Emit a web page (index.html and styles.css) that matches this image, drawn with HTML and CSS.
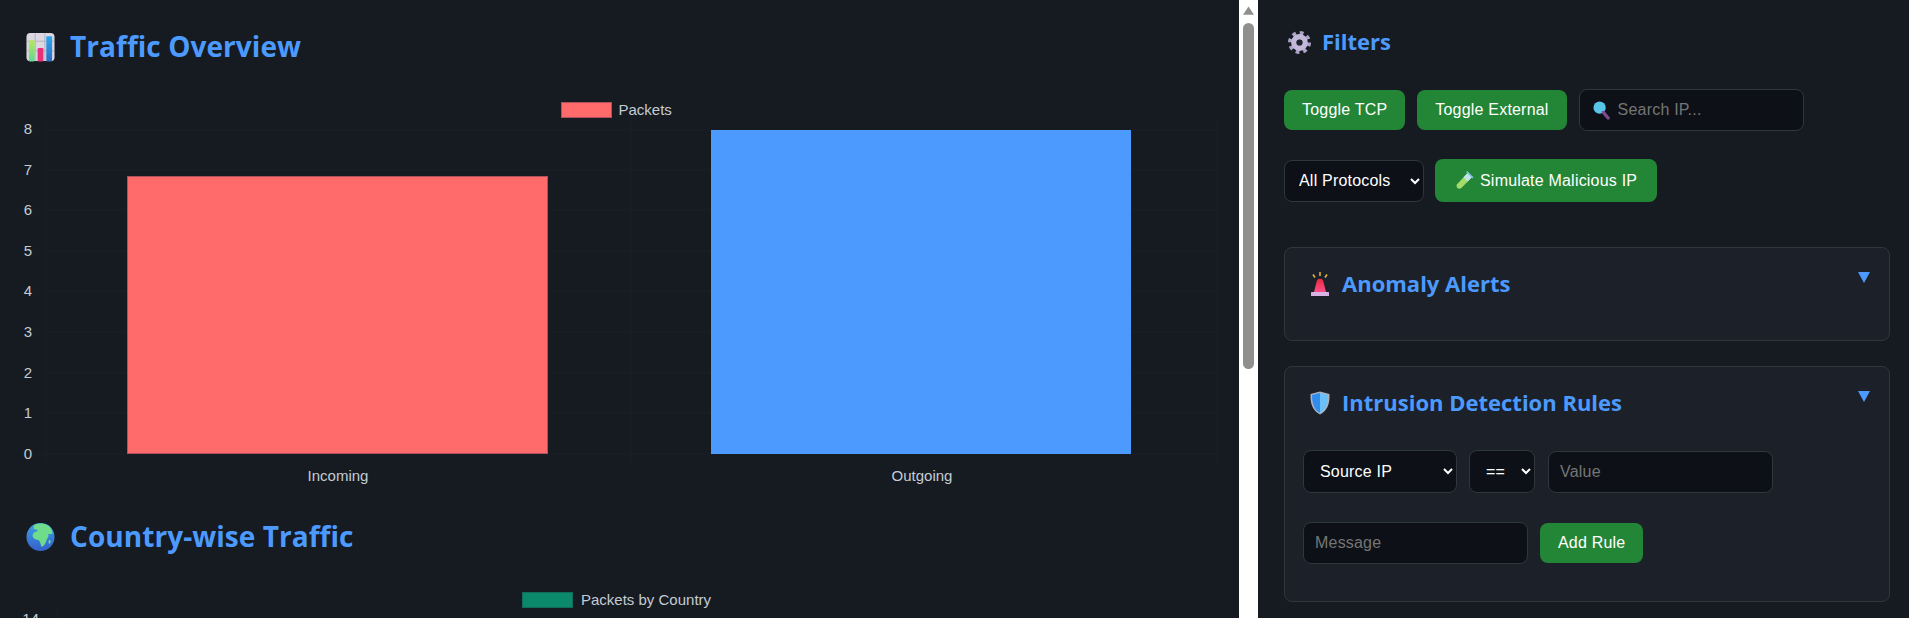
FILE: index.html
```html
<!DOCTYPE html>
<html lang="en">
<head>
<meta charset="UTF-8">
<meta name="viewport" content="width=device-width, initial-scale=1.0">
<title>Network Traffic Dashboard</title>
<link rel="stylesheet" href="styles.css">
</head>
<body>
  <div class="page">

    <div class="main">
      <h2 class="chart-title">
        <svg class="emoji-lg" viewBox="0 0 30 30">
          <defs>
            <linearGradient id="barGreen" x1="0" y1="0" x2="0" y2="1"><stop offset="0" stop-color="#b6e85a"/><stop offset="1" stop-color="#5fd98c"/></linearGradient>
            <linearGradient id="barBlue" x1="0" y1="0" x2="0" y2="1"><stop offset="0" stop-color="#2ba7f0"/><stop offset="1" stop-color="#2b6fc4"/></linearGradient>
          </defs>
          <rect x="0.5" y="0.5" width="29" height="29" rx="4" fill="#dcd7e3"/>
          <path d="M9.5 1v28M19.5 1v28M1 9h28M1 19h28" stroke="#b5b0bd" stroke-width="1"/>
          <rect x="3" y="8" width="6" height="22" rx="1" fill="url(#barGreen)"/>
          <rect x="12" y="16" width="6" height="14" rx="1" fill="#e8307a"/>
          <rect x="21" y="4" width="6" height="26" rx="1" fill="url(#barBlue)"/>
        </svg>
        Traffic Overview
      </h2>
      <svg class="chart" viewBox="0 0 1200 400">
        <g class="grid">
          <path d="M26 40H1197M26 80H1197M26 120H1197M26 161H1197M26 201H1197M26 242H1197M26 283H1197M26 323H1197"/>
          <path d="M26 30V373M611 30V373M1197 30V373M17 364H1197"/>
        </g>
        <rect class="bar-red" x="107.500" y="86.500" width="420" height="277"/>
        <rect class="bar-blue" x="691" y="40" width="420" height="324"/>
        <rect class="bar-red" x="541.500" y="12.500" width="50" height="15"/>
        <text class="legend-text" x="598.500" y="25">Packets</text>
        <g class="ticks" text-anchor="end">
          <text x="12" y="44">8</text>
          <text x="12" y="85">7</text>
          <text x="12" y="125">6</text>
          <text x="12" y="166">5</text>
          <text x="12" y="206">4</text>
          <text x="12" y="247">3</text>
          <text x="12" y="288">2</text>
          <text x="12" y="328">1</text>
          <text x="12" y="369">0</text>
        </g>
        <g class="ticks" text-anchor="middle">
          <text x="318" y="391">Incoming</text>
          <text x="902" y="391">Outgoing</text>
        </g>
      </svg>

      <h2 class="chart-title spaced">
        <svg class="emoji-lg" viewBox="0 0 30 30">
          <defs>
            <linearGradient id="globeBlue" x1="0" y1="0" x2="0" y2="1"><stop offset="0" stop-color="#3aa0ea"/><stop offset="1" stop-color="#3660c8"/></linearGradient>
          </defs>
          <ellipse cx="15" cy="15" rx="14.500" ry="14.500" fill="url(#globeBlue)"/>
          <path d="M8 3C11 0.500 20 0 24 4C27 7 28 10 27 12L23 12C24 15 22 16 21 19C20 23 18 25 16 25C15 22 15 20 13 18C9 18 6 16 7 12C8 10 10 9 12 9C12 7 10 7 8 7Z" fill="#6fdc8c"/>
          <path d="M24 18C26 18 26 21 24 22C23 21 23 19 24 18Z" fill="#6fdc8c"/>
        </svg>
        Country-wise Traffic
      </h2>
      <svg class="chart" viewBox="0 0 1200 400">
        <g class="grid">
          <path d="M37 39H1197M37 30V373"/>
        </g>
        <rect class="bar-green" x="502.500" y="12.500" width="50" height="15"/>
        <text class="legend-text" x="561" y="25">Packets by Country</text>
        <g class="ticks" text-anchor="end">
          <text x="19" y="44">14</text>
        </g>
      </svg>
    </div>

    <div class="scrollbar">
      <svg class="scroll-arrow" viewBox="0 0 12 9"><path d="M6 0L12 9H0Z"/></svg>
      <div class="scroll-thumb"></div>
    </div>

    <div class="side">
      <h3 class="filters-title">
        <svg class="emoji-md" viewBox="0 0 24 24">
          <circle cx="12" cy="12" r="10" fill="none" stroke="#ada2c8" stroke-width="4" stroke-dasharray="3.850 4"/>
          <circle cx="12" cy="12" r="6" fill="none" stroke="#c2b8d8" stroke-width="5.500"/>
          <circle cx="12" cy="12" r="2.800" fill="#1f2330"/>
        </svg>
        Filters
      </h3>

      <div class="filter-row first">
        <button class="btn">Toggle TCP</button>
        <button class="btn">Toggle External</button>
        <div class="search-box">
          <svg class="search-icon" viewBox="0 0 18 20">
            <circle cx="7" cy="7" r="6.500" fill="#57c4e8"/>
            <path d="M11 12L16 18" stroke="#7d4a8c" stroke-width="3.500" stroke-linecap="round"/>
          </svg>
          <input class="field search" type="text" placeholder="Search IP...">
        </div>
      </div>

      <div class="filter-row">
        <select class="field protocols"><option>All Protocols</option></select>
        <button class="btn sim">
          <svg class="emoji-sm" viewBox="0 0 18 18">
            <path d="M12 2L16 6L6 16C4.500 17.500 1 17 1.500 13Z" fill="#a4dc6a"/>
            <path d="M12 2L16 6L12 10L8 6Z" fill="#bfe3ee"/>
            <path d="M11 0.500L17 6.500" stroke="#7fc4e0" stroke-width="1.500"/>
          </svg>
          Simulate Malicious IP
        </button>
      </div>

      <div class="card alerts">
        <h3 class="card-title">
          <svg class="emoji-card" viewBox="0 0 20 24">
            <defs>
              <linearGradient id="sirenRed" x1="0" y1="0" x2="0" y2="1"><stop offset="0" stop-color="#e8283f"/><stop offset="1" stop-color="#ff4f88"/></linearGradient>
            </defs>
            <path d="M6.500 10C6.500 5.500 13.500 5.500 13.500 10L16 20H4Z" fill="url(#sirenRed)"/>
            <rect x="1" y="20" width="18" height="4" rx="0.500" fill="#d8b4e6"/>
            <path d="M10 0V4M3 2.500L5 5.500M17 2.500L15 5.500" stroke="#e8b93a" stroke-width="1.500"/>
          </svg>
          Anomaly Alerts
        </h3>
        <span class="caret"></span>
      </div>

      <div class="card">
        <h3 class="card-title">
          <svg class="emoji-card" viewBox="0 0 20 24">
            <path d="M10 0.500L19.500 3C20 13 17 20 10 23.500C3 20 0 13 0.500 3Z" fill="#aab2c0"/>
            <path d="M10 2L2 4C2 13 4.500 19 10 22Z" fill="#2f8df0"/>
            <path d="M10 2L18 4C18 13 15.500 19 10 22Z" fill="#6cc0f8"/>
          </svg>
          Intrusion Detection Rules
        </h3>
        <span class="caret"></span>
        <div class="rule-row first">
          <select class="field rule-source"><option>Source IP</option></select>
          <select class="field rule-op"><option>==</option></select>
          <input class="field rule-text value" type="text" placeholder="Value">
        </div>
        <div class="rule-row">
          <input class="field rule-text" type="text" placeholder="Message">
          <button class="btn">Add Rule</button>
        </div>
      </div>
    </div>

  </div>
</body>
</html>
```

FILE: styles.css
```css
* {
  box-sizing: border-box;
}

body {
  margin: 0;
  background-color: #161b22;
  font-family: "Liberation Sans", Arial, sans-serif;
  font-size: 16px;
  color: #c9d1d9;
}

.page {
  display: flex;
  height: 100vh;
  overflow: hidden;
}

/* left column with the charts */
.main {
  width: 1239px;
  flex-shrink: 0;
  padding: 29px 19px 0 20px;
  overflow: hidden;
}

.chart-title {
  display: flex;
  align-items: center;
  gap: 15px;
  height: 36px;
  margin: 0 0 25px 6px;
  padding-bottom: 2px;
  font-family: "Open Sans", sans-serif;
  font-size: 28px;
  font-weight: 700;
  letter-spacing: 0.05px;
  color: #4d9aff;
}

.chart-title.spaced {
  margin-top: 29px;
}

/* the titles sit 1px high for the text, the icons keep their place */
.chart-title svg,
.filters-title svg,
.card-title svg {
  margin-bottom: -2px;
}

.emoji-lg {
  width: 29px;
  height: 30px;
}

.chart {
  display: block;
  width: 1200px;
  height: 400px;
  overflow: visible;
}

.grid path {
  fill: none;
  stroke: #1a1f26;
  stroke-width: 1;
}

.bar-red {
  fill: #ff6b6b;
  stroke: #b0505a;
  stroke-width: 1;
}

.bar-blue {
  fill: #4d9aff;
}

.bar-green {
  fill: #0a8a6b;
  stroke: #0f6b5a;
  stroke-width: 1;
}

.legend-text,
.ticks text {
  font-family: "Liberation Sans", Arial, sans-serif;
  font-size: 15px;
  fill: #c4ccd4;
}

/* window scrollbar between the two columns */
.scrollbar {
  width: 19px;
  flex-shrink: 0;
  padding: 6px 4px 0;
  background: #fff;
}

.scroll-arrow {
  display: block;
  width: 11px;
  height: 9px;
  fill: #8f8f8f;
}

.scroll-thumb {
  height: 346px;
  margin-top: 8px;
  border-radius: 6px;
  background: #8f8f8f;
}

/* right column */
.side {
  flex: 1;
  padding: 27px 19px 0 26px;
}

.filters-title {
  display: flex;
  align-items: center;
  gap: 11px;
  height: 30px;
  margin: 0 0 32px 4px;
  padding-bottom: 2px;
  font-family: "Open Sans", sans-serif;
  font-size: 22px;
  font-weight: 700;
  color: #4d9aff;
}

.emoji-md {
  width: 23px;
  height: 23px;
}

.filter-row {
  display: flex;
  align-items: center;
  gap: 11px;
}

.filter-row.first {
  gap: 12px;
  margin-bottom: 28px;
}

.btn {
  height: 40px;
  padding: 0 18px;
  border: none;
  border-radius: 8px;
  background-color: #238636;
  font-family: inherit;
  font-size: 16px;
  letter-spacing: 0.2px;
  color: #fff;
  white-space: nowrap;
}

.btn.sim {
  display: flex;
  align-items: center;
  gap: 6px;
  height: 43px;
  padding: 0 20px;
}

.emoji-sm {
  width: 19px;
  height: 21px;
}

.field {
  height: 42px;
  padding: 0 11px;
  border: 1px solid #30363d;
  border-radius: 8px;
  background-color: #0d1117;
  font-family: inherit;
  font-size: 16px;
  letter-spacing: 0.2px;
  color: #fff;
}

.field::placeholder {
  color: #757575;
}

.search-box {
  position: relative;
}

.search-icon {
  position: absolute;
  left: 14px;
  top: 12px;
  width: 17px;
  height: 19px;
}

.search {
  width: 225px;
  padding-left: 38px;
}

.protocols {
  width: 140px;
  padding: 0 10px;
}

.card {
  position: relative;
  margin-top: 45px;
  padding: 20px 18px 38px;
  border: 1px solid #30363d;
  border-radius: 8px;
  background-color: #1c2129;
}

.card.alerts {
  height: 94px;
}

.card.alerts + .card {
  margin-top: 25px;
  height: 236px;
}

.card-title {
  display: flex;
  align-items: center;
  gap: 12px;
  height: 32px;
  margin: 0 0 0 7px;
  padding-bottom: 2px;
  font-family: "Open Sans", sans-serif;
  font-size: 22px;
  font-weight: 700;
  color: #4d9aff;
}

.emoji-card {
  width: 20px;
  height: 24px;
}

.caret {
  position: absolute;
  top: 24px;
  right: 19px;
  width: 0;
  height: 0;
  border-left: 6px solid transparent;
  border-right: 6px solid transparent;
  border-top: 11px solid #4d9aff;
}

.rule-row {
  display: flex;
  align-items: center;
  gap: 12px;
}

.rule-row.first {
  margin: 31px 0 29px;
}

.rule-source {
  width: 154px;
  height: 43px;
  padding: 0 12px;
}

.rule-op {
  width: 66px;
  height: 43px;
  padding: 0 12px;
}

.rule-text {
  width: 225px;
}

.value {
  margin-left: 1px;
}
```
